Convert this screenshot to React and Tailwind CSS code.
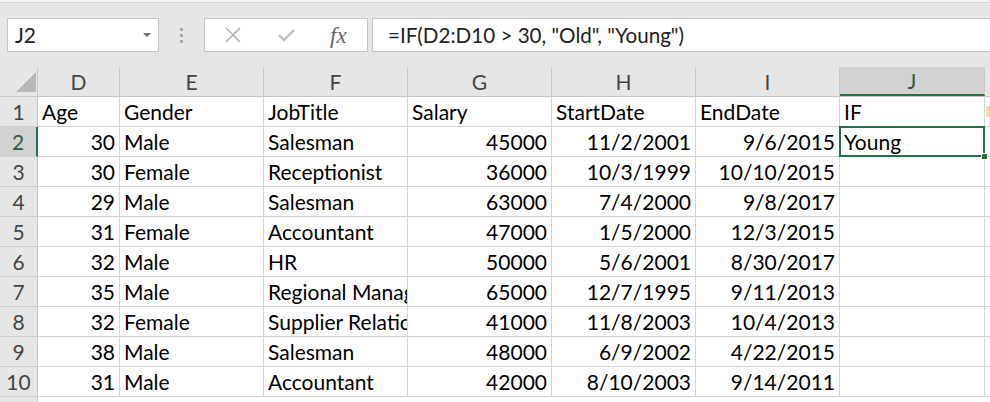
import React from 'react'

const cols = [
  { key: 'D', w: 'w-[82px]', align: 'right' },
  { key: 'E', w: 'w-[144px]', align: 'left' },
  { key: 'F', w: 'w-[144px]', align: 'left' },
  { key: 'G', w: 'w-[144px]', align: 'right' },
  { key: 'H', w: 'w-[144px]', align: 'right' },
  { key: 'I', w: 'w-[144px]', align: 'right' },
  { key: 'J', w: 'w-[145px]', align: 'left' },
]

const rows = [
  ['Age', 'Gender', 'JobTitle', 'Salary', 'StartDate', 'EndDate', 'IF'],
  ['30', 'Male', 'Salesman', '45000', '11/2/2001', '9/6/2015', 'Young'],
  ['30', 'Female', 'Receptionist', '36000', '10/3/1999', '10/10/2015', ''],
  ['29', 'Male', 'Salesman', '63000', '7/4/2000', '9/8/2017', ''],
  ['31', 'Female', 'Accountant', '47000', '1/5/2000', '12/3/2015', ''],
  ['32', 'Male', 'HR', '50000', '5/6/2001', '8/30/2017', ''],
  ['35', 'Male', 'Regional Manager', '65000', '12/7/1995', '9/11/2013', ''],
  ['32', 'Female', 'Supplier Relations', '41000', '11/8/2003', '10/4/2013', ''],
  ['38', 'Male', 'Salesman', '48000', '6/9/2002', '4/22/2015', ''],
  ['31', 'Male', 'Accountant', '42000', '8/10/2003', '9/14/2011', ''],
]

function FormulaBar() {
  return (
    <div className="flex items-center h-[34px] mt-[15px] pl-[7px]">
      <div className="relative w-[152px] h-[34px] bg-white border border-[#c6c6c6] flex items-center pl-[7px] text-[21px] text-[#222]">
        J2
        <span className="absolute right-[7px] top-[14px] w-0 h-0 border-l-[4px] border-r-[4px] border-t-[4px] border-l-transparent border-r-transparent border-t-[#6f6f6f]" />
      </div>
      <div className="w-[45px] flex flex-col items-center gap-[3px]">
        <span className="w-[3px] h-[3px] bg-[#a8a8a8]" />
        <span className="w-[3px] h-[3px] bg-[#a8a8a8]" />
        <span className="w-[3px] h-[3px] bg-[#a8a8a8]" />
      </div>
      <div className="w-[164px] h-[34px] bg-white border border-[#c6c6c6] flex items-center">
        <svg className="ml-[20px]" width="16" height="16" viewBox="0 0 16 16">
          <path d="M1 1 L15 15 M15 1 L1 15" stroke="#b3b3b3" strokeWidth="1.6" fill="none" />
        </svg>
        <svg className="ml-[37px]" width="17" height="14" viewBox="0 0 17 14">
          <path d="M1 7 L6 12 L16 2" stroke="#bdbdbd" strokeWidth="2.4" fill="none" />
        </svg>
        <span className="ml-[35px] text-[23px] italic text-[#666] font-['Liberation_Serif',serif] leading-none">
          fx
        </span>
      </div>
      <div className="ml-[4px] flex-1 h-[34px] bg-white border border-[#c6c6c6] border-r-0 flex items-center pl-[15px] text-[20.6px] text-[#222]">
        =IF(D2:D10 &gt; 30, "Old", "Young")
      </div>
    </div>
  )
}

function HeaderRow() {
  return (
    <div className="flex h-[30px] mt-[15px] border-b border-[#c8c8c8]">
      <div className="w-[38px] h-full border-r border-[#c8c8c8] relative">
        <svg className="absolute left-[16px] top-[5px]" width="20" height="20" viewBox="0 0 20 20">
          <path d="M20 0 L20 20 L0 20 Z" fill="#b8b8b8" />
        </svg>
      </div>
      {cols.map((c) =>
        c.key === 'J' ? (
          <div
            key={c.key}
            className={`${c.w} h-full bg-[#d2d2d2] border-b-2 border-[#217346] border-r border-r-[#c8c8c8] flex items-center justify-center text-[21px] text-[#2d5a3d]`}
          >
            {c.key}
          </div>
        ) : (
          <div
            key={c.key}
            className={`${c.w} h-full border-r border-[#c8c8c8] flex items-center justify-center text-[21px] text-[#444]`}
          >
            {c.key}
          </div>
        )
      )}
      <div className="flex-1 h-full" />
    </div>
  )
}

function DataRow({ values, index }) {
  const selectedRow = index === 2
  const isHeader = index === 1
  return (
    <div className="flex h-[30px]">
      <div
        className={
          selectedRow
            ? 'w-[38px] h-full bg-[#d2d2d2] border-r-2 border-r-[#217346] border-b border-b-[#d0d0d0] flex items-center justify-center text-[21px] text-[#2d5a3d]'
            : 'w-[38px] h-full border-r border-r-[#c8c8c8] border-b border-b-[#d0d0d0] flex items-center justify-center text-[21px] text-[#444]'
        }
      >
        {index}
      </div>
      {cols.map((c, i) => {
        const selected = selectedRow && c.key === 'J'
        const right = !isHeader && c.align === 'right'
        return (
          <div key={c.key} className={`${c.w} h-full relative bg-white border-r border-b border-[#d4d4d4]`}>
            <div
              className={`h-full overflow-hidden whitespace-nowrap leading-[30px] text-[21px] text-black ${
                right ? 'text-right pr-[4px]' : 'pl-[4px]'
              }`}
            >
              {values[i]}
            </div>
            {selected && (
              <>
                <span className="absolute z-10 left-[-1px] top-[-1px] right-[-1px] bottom-[-1px] border-2 border-[#217346]" />
                <span className="absolute z-10 right-[-4px] bottom-[-4px] w-[7px] h-[7px] bg-[#217346] border border-white" />
              </>
            )}
          </div>
        )
      })}
      <div className="flex-1 h-full bg-white border-b border-[#d4d4d4] relative">
        {isHeader && <span className="absolute left-[1px] top-[9px] w-[4px] h-[11px] bg-[#f7d7a8]" />}
      </div>
    </div>
  )
}

export default function App() {
  return (
    <div className="w-[990px] h-[402px] overflow-hidden bg-[#e6e6e6] font-['Lato',sans-serif]">
      <div className="h-[3px] bg-[#f3f3f3] border-b border-[#d6d6d6]" />
      <FormulaBar />
      <HeaderRow />
      {rows.map((r, i) => (
        <DataRow key={i} values={r} index={i + 1} />
      ))}
      <div className="flex h-[30px]">
        <div className="w-[38px] h-full border-r border-[#c8c8c8]" />
        <div className="flex-1 h-full bg-white" />
      </div>
    </div>
  )
}
